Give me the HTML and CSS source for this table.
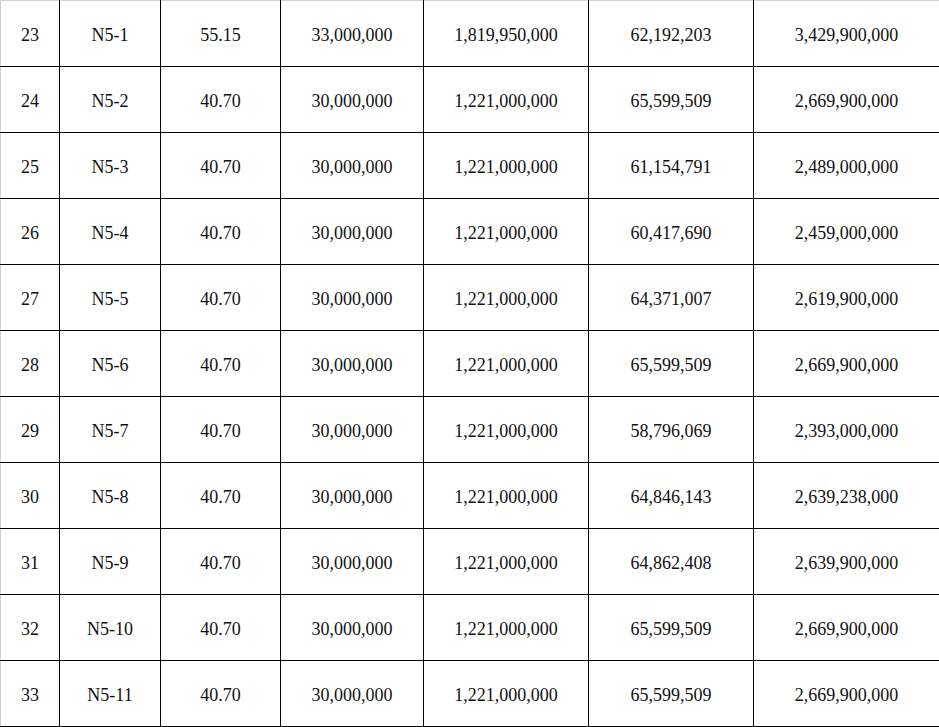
FILE: index.html
```html
<!DOCTYPE html>
<html>
<head>
<meta charset="utf-8">
<link rel="stylesheet" href="styles.css">
</head>
<body>
<table class="grid">
<colgroup>
<col class="c1"><col class="c2"><col class="c3"><col class="c4"><col class="c5"><col class="c6"><col class="c7">
</colgroup>
<tbody>
<tr><td>23</td><td>N5-1</td><td>55.15</td><td>33,000,000</td><td>1,819,950,000</td><td>62,192,203</td><td>3,429,900,000</td></tr>
<tr><td>24</td><td>N5-2</td><td>40.70</td><td>30,000,000</td><td>1,221,000,000</td><td>65,599,509</td><td>2,669,900,000</td></tr>
<tr><td>25</td><td>N5-3</td><td>40.70</td><td>30,000,000</td><td>1,221,000,000</td><td>61,154,791</td><td>2,489,000,000</td></tr>
<tr><td>26</td><td>N5-4</td><td>40.70</td><td>30,000,000</td><td>1,221,000,000</td><td>60,417,690</td><td>2,459,000,000</td></tr>
<tr><td>27</td><td>N5-5</td><td>40.70</td><td>30,000,000</td><td>1,221,000,000</td><td>64,371,007</td><td>2,619,900,000</td></tr>
<tr><td>28</td><td>N5-6</td><td>40.70</td><td>30,000,000</td><td>1,221,000,000</td><td>65,599,509</td><td>2,669,900,000</td></tr>
<tr><td>29</td><td>N5-7</td><td>40.70</td><td>30,000,000</td><td>1,221,000,000</td><td>58,796,069</td><td>2,393,000,000</td></tr>
<tr><td>30</td><td>N5-8</td><td>40.70</td><td>30,000,000</td><td>1,221,000,000</td><td>64,846,143</td><td>2,639,238,000</td></tr>
<tr><td>31</td><td>N5-9</td><td>40.70</td><td>30,000,000</td><td>1,221,000,000</td><td>64,862,408</td><td>2,639,900,000</td></tr>
<tr><td>32</td><td>N5-10</td><td>40.70</td><td>30,000,000</td><td>1,221,000,000</td><td>65,599,509</td><td>2,669,900,000</td></tr>
<tr><td>33</td><td>N5-11</td><td>40.70</td><td>30,000,000</td><td>1,221,000,000</td><td>65,599,509</td><td>2,669,900,000</td></tr>
</tbody>
</table>
</body>
</html>
```
FILE: styles.css
```css
html, body {
  margin: 0;
  padding: 0;
  background: #ffffff;
}

.grid {
  border-collapse: collapse;
  table-layout: fixed;
  width: 939px;
  font-family: "Liberation Serif", "Times New Roman", serif;
  font-size: 18px;
  color: #111111;
}

.grid td {
  border: 1px solid #000000;
  height: 63px;
  padding: 2px 0 0 0;
  text-align: center;
  vertical-align: middle;
  line-height: 20px;
}

.grid tr:first-child td {
  border-top-color: #cfcfcf;
}

.grid td:first-child {
  border-left-color: #cfcfcf;
}

.c1 { width: 59px; }
.c2 { width: 101px; }
.c3 { width: 120px; }
.c4 { width: 143px; }
.c5 { width: 165px; }
.c6 { width: 165px; }
.c7 { width: 186px; }
```
